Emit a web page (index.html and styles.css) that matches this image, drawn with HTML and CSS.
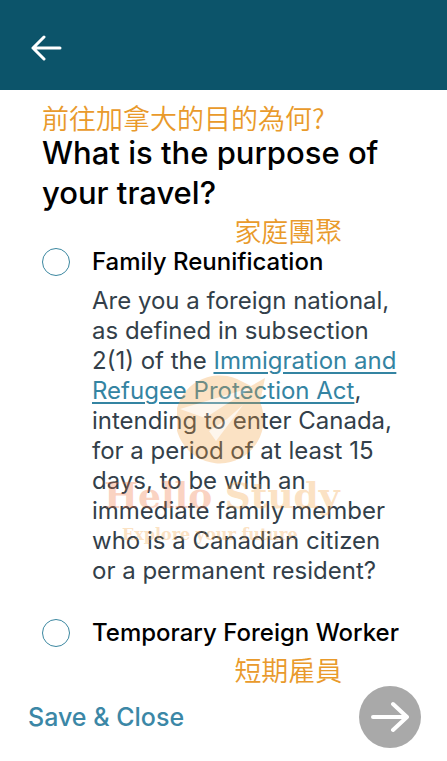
FILE: index.html
```html
<!DOCTYPE html>
<html lang="en">
<head>
<meta charset="utf-8">
<meta name="viewport" content="width=device-width, initial-scale=1">
<title>Purpose of travel</title>
<link rel="stylesheet" href="styles.css">
</head>
<body>
<header class="topbar">
  <button class="back" type="button" aria-label="Back">
    <svg width="32" height="26" viewBox="0 0 32 26" fill="none" stroke="currentColor" stroke-width="3" stroke-linecap="round" stroke-linejoin="round"><path d="M30 13H3M14 2L3 13l11 11"/></svg>
  </button>
</header>
<main class="content">
  <p class="note" lang="zh-Hant">前往加拿大的目的為何?</p>
  <h1 class="title">What is the purpose of your travel?</h1>
  <p class="note note-option" lang="zh-Hant">家庭團聚</p>
  <div class="option">
    <input class="radio" type="radio" name="purpose" id="family" aria-describedby="family-text">
    <label class="label" for="family">Family Reunification</label>
    <p class="text" id="family-text">Are you a foreign national, as defined in subsection 2(1) of the <a class="link" href="#">Immigration and Refugee Protection Act</a>, intending to enter Canada, for a period of at least 15 days, to be with an immediate family member who is a Canadian citizen or a permanent resident?</p>
  </div>
  <div class="option">
    <input class="radio" type="radio" name="purpose" id="worker">
    <label class="label" for="worker">Temporary Foreign Worker</label>
  </div>
  <p class="note note-option note-below" lang="zh-Hant">短期雇員</p>
  <div class="watermark">
    <svg class="mark" width="90" height="90" viewBox="0 0 90 90"><path fill="#f5a040" d="M60 4A44 44 0 1 0 83 27L88 3 74 11Z"/><path fill="#fff" fill-opacity=".7" d="M3 34L76 12 28 43ZM32 56L50 44 66 30 39 66Z"/></svg>
    <div class="brand"><span class="brand-first">Hello</span> Study</div>
    <div class="tagline">Explore your future</div>
  </div>
</main>
<footer class="actions">
  <button class="save" type="button">Save &amp; Close</button>
  <button class="next" type="button" aria-label="Next">
    <svg width="38" height="32" viewBox="0 0 38 32" fill="none" stroke="currentColor" stroke-width="4" stroke-linecap="round" stroke-linejoin="round"><path d="M2 16h34M22 3l14 13-14 13"/></svg>
  </button>
</footer>
</body>
</html>
```
FILE: styles.css
```css
* {
  box-sizing: border-box;
}

body {
  margin: 0;
  min-height: 100vh;
  display: flex;
  flex-direction: column;
  background: #fff;
  color: #000;
  font-family: Inter, "Noto Sans CJK TC", sans-serif;
}

button {
  padding: 0;
  border: 0;
  background: none;
  font: inherit;
  cursor: pointer;
}

.topbar {
  padding: 35px 30px 29px;
  background: #0c546a;
  color: #fff;
}

.back {
  display: block;
  color: inherit;
}

.back svg,
.next svg {
  display: block;
}

.content {
  position: relative;
  padding: 14px 42px 0;
}

.note {
  margin: 0;
  color: #e99a2b;
  font-family: "Noto Sans CJK TC", sans-serif;
  font-size: 27px;
  font-weight: 350;
  line-height: 28px;
}

.note-option {
  margin-left: 53%;
}

.note-below {
  margin-top: 6px;
}

.title {
  margin: 1px 0 4px;
  font-size: 31px;
  font-weight: 500;
  line-height: 40px;
}

.option {
  display: grid;
  grid-template-columns: 28px 1fr;
  column-gap: 22px;
  align-items: center;
  margin-right: -10px;
}

.radio {
  appearance: none;
  width: 28px;
  height: 28px;
  margin: 0;
  border: 1px solid #3b87a0;
  border-radius: 50%;
}

.radio:checked {
  background: #3b87a0;
}

.label {
  font-size: 24px;
  font-weight: 500;
  line-height: 34px;
}

.text {
  grid-column: 2;
  margin: 7px 0 30px;
  padding-right: 10px;
  color: #333f4a;
  font-size: 24px;
  line-height: 30px;
}

.link {
  color: #3484a2;
  text-decoration-thickness: 2px;
  text-underline-offset: 3px;
}

.watermark {
  position: absolute;
  top: 285px;
  left: 104px;
  opacity: 0.3;
  color: #f5a040;
  font-family: "DejaVu Serif", serif;
  font-weight: 700;
  white-space: nowrap;
  pointer-events: none;
}

.mark {
  display: block;
  margin-left: 73px;
}

.brand {
  font-size: 36px;
  line-height: 60px;
}

.brand-first {
  color: #f0703a;
}

.tagline {
  margin-left: 18px;
  font-size: 16px;
  line-height: 20px;
}

.actions {
  display: flex;
  align-items: center;
  justify-content: space-between;
  margin-top: auto;
  padding: 0 26px 13px 28px;
}

.save {
  color: #3b87a6;
  font-size: 25px;
  font-weight: 500;
}

.next {
  display: grid;
  place-items: center;
  width: 62px;
  height: 62px;
  border-radius: 50%;
  background: #a9a9a9;
  color: #fff;
}
```
